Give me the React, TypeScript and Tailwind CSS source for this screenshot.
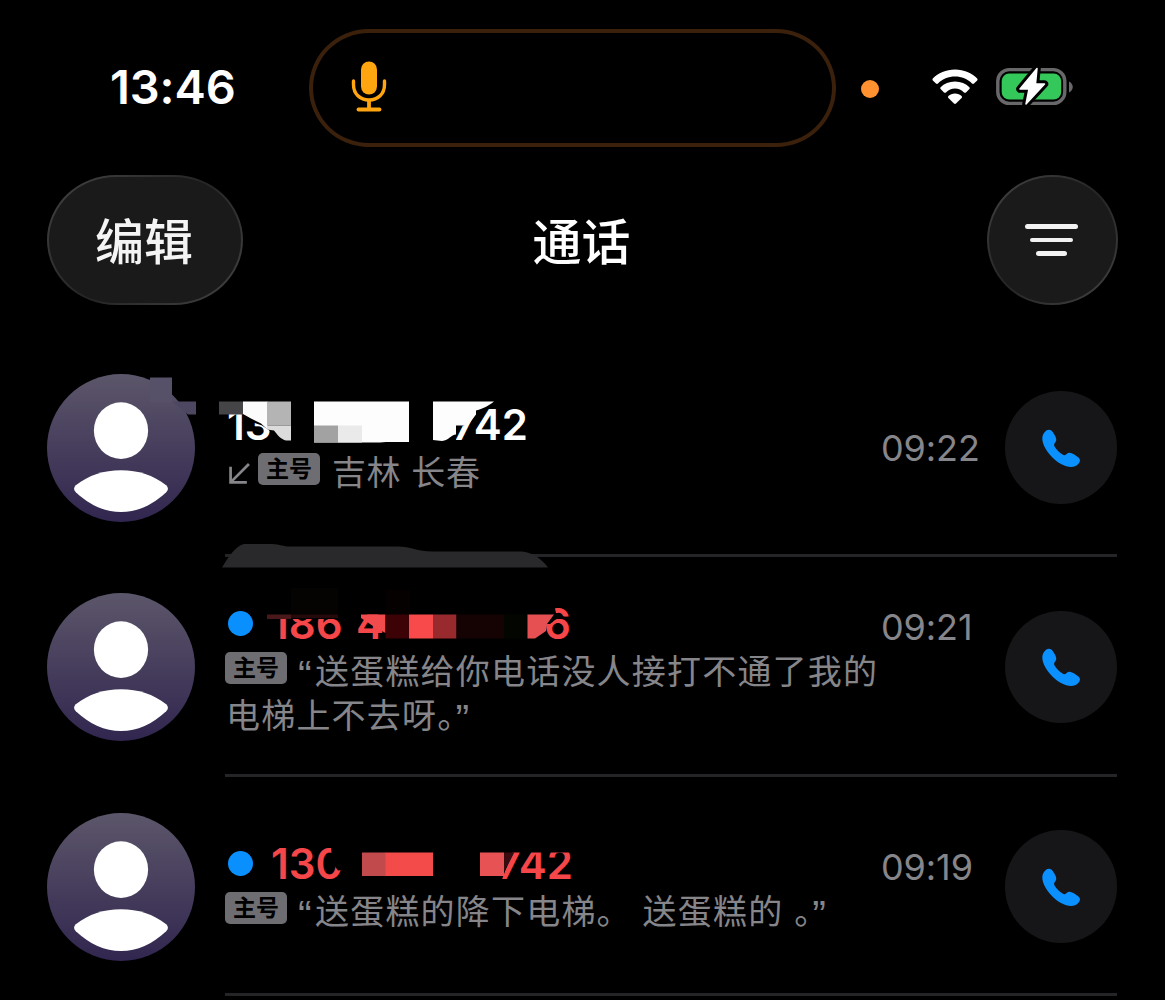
import type { ReactNode } from "react"

type Call = {
  id: number
  number: ReactNode
  missed: boolean
  place?: string
  voicemail?: string[]
  time: string
  numberClass: string
  timeClass: string
  top: number
  overlay: ReactNode
}

// rows are 219.5px high, overlays use the page's own y values
const ROW_H = 219.5

const calls: Call[] = [
  {
    id: 1,
    number: (
      <>
        <span className="w-[225px]">130</span>
        <span>742</span>
      </>
    ),
    missed: false,
    place: "吉林 长春",
    time: "09:22",
    numberClass: "mt-[62px]",
    timeClass: "mt-[87px]",
    top: 337.5,
    overlay: (
      <>
        <rect x="150" y="377" width="22" height="25" fill="#565069" />
        <path d="M172 401 H196 V414 H188 L172 401 Z" fill="#4e4762" />
        <path d="M243 405 H302 V443 H272 L271 431 L262 425 L250 421 L243 416 Z" fill="#000" />
        <rect x="219" y="401" width="24" height="13" fill="#454547" />
        <path d="M243 401 H267.500 V429 L261 423 L257 421 L251 418 L243 413.500 Z" fill="#fbfbfb" />
        <path d="M267 401 H291 V425 H267 Z" fill="#b4b4b4" />
        <path d="M267 425 H291 V440 H286 C281 439 277 434 274 430 L267 429 Z" fill="#dcdcdc" />
        <path d="M314 401 H409 V441.500 H386 L380 442 H314 Z" fill="#fdfdfd" />
        <rect x="314" y="425" width="24" height="17" fill="#a2a2a2" />
        <rect x="338" y="425" width="24" height="17" fill="#eaeaea" />
        <path d="M432 401 H476 V411 L464 425 H456 V441 H432 Z" fill="#000" />
        <path d="M433 401 H494 C489 405 484 408 476 410 V414 L467 426 V425 H456 V434 C451 434 449 440 442 440.500 L433 439.500 Z" fill="#fdfdfd" />
        <path
          d="M222 567 C228 557 236 545 244 543.500 H272 C280 544 284 546 290 546 H398 C410 546 418 551 432 551 H522 C534 552 543 560 548 567 Z"
          fill="#29292b"
        />
      </>
    ),
  },
  {
    id: 2,
    number: (
      <>
        <span className="w-[85px]">186</span>
        <span className="w-[188px]">4</span>
        <span>6</span>
      </>
    ),
    missed: true,
    voicemail: ["送蛋糕给你电话没人接打不通了我的", "电梯上不去呀"],
    time: "09:21",
    numberClass: "mt-[42px]",
    timeClass: "mt-[47px]",
    top: 557,
    overlay: (
      <>
        <rect x="266" y="600" width="120" height="14.5" fill="#000" />
        <rect x="266" y="614" width="78" height="5" fill="#000" />
        <rect x="267" y="614.5" width="24" height="4.5" fill="#4a181a" />
        <rect x="291" y="614.5" width="47" height="3.5" fill="#260a0b" />
        <rect x="291" y="588" width="47" height="26" fill="#050202" />
        <rect x="386" y="590" width="24" height="24" fill="#050101" />
        <path d="M361 614.500 H385.500 V633 L376 628 L361 618 Z" fill="#f14b4d" />
        <rect x="385.500" y="614.500" width="23.500" height="24" fill="#3c0205" />
        <rect x="409" y="614.500" width="24" height="24" fill="#f84a4a" />
        <rect x="433" y="614.500" width="23.500" height="24" fill="#982a2d" />
        <rect x="456.500" y="614.500" width="47.500" height="24" fill="#150303" />
        <rect x="504" y="614.500" width="24" height="24" fill="#030600" />
        <path d="M544 604 H554 L556 613 L569 619 L556 619 L550 624 H544 Z" fill="#000" />
        <path d="M527.500 614.500 H554 L547 624 L546 631 L535 638.500 H527.500 Z" fill="#e65053" />
      </>
    ),
  },
  {
    id: 3,
    number: (
      <>
        <span className="w-[226px]">130</span>
        <span>742</span>
      </>
    ),
    missed: true,
    voicemail: ["送蛋糕的降下电梯。 送蛋糕的 "],
    time: "09:19",
    numberClass: "mt-[62.5px]",
    timeClass: "mt-[67px]",
    top: 776.5,
    overlay: (
      <>
        <path d="M331 846 H346 V869 L338 870 L332 862 Z" fill="#000" />
        <rect x="362" y="852" width="24" height="23.5" fill="#c14a4d" />
        <rect x="385.5" y="852" width="47.5" height="23.5" fill="#f34b49" />
        <rect x="480" y="846" width="96" height="6" fill="#000" />
        <path d="M490 846 H514 L502 879 H490 Z" fill="#000" />
        <rect x="480" y="852" width="24" height="23.5" fill="#e75254" />
        <path d="M504 852 H514 L504 871 Z" fill="#3a0a0e" />
      </>
    ),
  },
]

const Avatar = () => (
  <svg className="mt-9 size-[148px] shrink-0" viewBox="0 0 149 149">
    <defs>
      <linearGradient id="avatar" x1="0" y1="0" x2="0" y2="1">
        <stop offset="0" stopColor="#5c566a" />
        <stop offset="1" stopColor="#31264f" />
      </linearGradient>
    </defs>
    <circle cx="74.500" cy="74.500" r="74.500" fill="url(#avatar)" />
    <ellipse cx="74.500" cy="57" rx="27.300" ry="28.500" fill="#fff" />
    <path
      d="M29 112 C42 102 57 97 74.500 97 C92 97 107 102 120 112 Q123.500 115.500 120 119 C106 132 91 139 74.500 139 C58 139 43 132 29 119 Q25.500 115.500 29 112 Z"
      fill="#fff"
    />
  </svg>
)

const SimBadge = () => (
  <span className="flex h-8 w-[62px] shrink-0 items-center justify-center rounded-[5px] bg-[#6e6d72] pt-px text-[23px] leading-none font-bold tracking-normal text-black">
    主号
  </span>
)

const Quote = ({ children }: { children: ReactNode }) => (
  <span className="inline-block h-[44px] w-[17px] align-top font-['Liberation_Sans',sans-serif] text-[41px] leading-[50px] tracking-normal">
    {children}
  </span>
)

const PhoneIcon = () => (
  <svg className="mt-px size-10" viewBox="0 0 40 40">
    <path
      d="M3 5 C5 2 8 0.800 10.300 2.500 C12 4 13.500 6.500 14.800 9.500 C15.600 11.500 15.400 13 14.200 14.500 C12.800 16 12.800 17.200 13.800 19 C16 22.200 18.500 24.500 21.500 26.500 C23 27.500 24.200 27.400 25.600 26 C27.300 24.500 29 24.400 31 25.400 C33.500 26.500 35.500 27.800 37.500 29.500 C39.600 31.300 39.400 33.500 37.500 35.800 C33.500 40 27.500 40 20 36 C12 31.500 4.500 23 2 15 C0.800 10.500 1.200 7.500 3 5 Z"
      fill="#0a91ff"
    />
  </svg>
)

const MicIcon = () => (
  <svg className="mb-[3px] h-[51px] w-9" viewBox="0 0 36 51" fill="none" stroke="#ffa50f" strokeLinecap="round">
    <rect x="10" y="0.500" width="16" height="33" rx="8" fill="#ffa50f" stroke="none" />
    <path d="M2.500 20 V23.500 C2.500 33 9 39 18 39 S33.500 33 33.500 23.500 V20" strokeWidth="3.400" />
    <path d="M18 40 V48" strokeWidth="3.800" />
    <path d="M7.500 48.500 H28.500" strokeWidth="3.800" />
  </svg>
)

const WifiIcon = () => (
  <svg className="h-9 w-[46px]" viewBox="0 0 46 36" fill="#fff">
    <path d="M23 0.500 C32 0.500 39.800 4 45.200 9.600 Q46 10.500 45.200 11.400 L42 14.500 Q41 15.300 40 14.400 C35.500 10 29.600 7.500 23 7.500 S10.500 10 6 14.400 Q5 15.300 4 14.500 L0.800 11.400 Q0 10.500 0.800 9.600 C6.200 4 14 0.500 23 0.500 Z" />
    <path d="M23 12.500 C28.800 12.500 33.800 14.700 37.400 18.200 Q38.200 19.200 37.400 20.100 L34 23.400 Q33 24.200 32 23.400 C29.500 21 26.500 19.600 23 19.600 S16.500 21 14 23.400 Q13 24.200 12 23.400 L8.600 20.100 Q7.800 19.200 8.600 18.200 C12.200 14.700 17.200 12.500 23 12.500 Z" />
    <path d="M23 24.500 C25.600 24.500 28 25.500 29.600 27 Q30.500 28 29.600 28.900 L24 34.500 Q23 35.300 22 34.500 L16.400 28.900 Q15.500 28 16.400 27 C18 25.500 20.400 24.500 23 24.500 Z" />
  </svg>
)

const BatteryIcon = () => (
  <svg className="h-10 w-[78px]" viewBox="0 0 78 40">
    <rect x="1.800" y="3.600" width="67" height="33.800" rx="11.500" fill="none" stroke="#68686b" strokeWidth="3.400" />
    <rect x="5.700" y="7.500" width="59.500" height="26" rx="7.500" fill="#34c759" />
    <path d="M73 15.500 C78 18 78 24 73 26.500 Z" fill="#68686b" />
    <path
      d="M41 2.500 L24 23 H33 L30 38 L48.500 18 H39.500 Z"
      fill="#fff"
      stroke="#000"
      strokeWidth="7.500"
      strokeLinejoin="round"
    />
    <path
      d="M41 2.500 L24 23 H33 L30 38 L48.500 18 H39.500 Z"
      fill="#fff"
      stroke="#fff"
      strokeWidth="1.500"
      strokeLinejoin="round"
    />
  </svg>
)

const StatusBar = () => (
  <div className="flex h-[175px] items-start">
    <div className="mt-[58px] ml-[110px] w-[199px] text-[47px] leading-[58px] font-semibold tracking-[-0.1px]">13:46</div>
    <div className="mt-[29px] flex h-[118px] w-[527px] items-center rounded-[60px_/_59px] border-4 border-[#3b210c] pl-[38px]">
      <MicIcon />
    </div>
    <div className="mt-[79.5px] ml-[25px] size-[18px] rounded-full bg-[#ff9130]" />
    <div className="mt-[68.5px] ml-[53px]">
      <WifiIcon />
    </div>
    <div className="mt-[66px] ml-[18px]">
      <BatteryIcon />
    </div>
  </div>
)

const NavBar = () => (
  <div className="flex h-[130px] items-center justify-between px-[47px]">
    <button className="h-[130px] w-[196px] rounded-[69px_/_65px] bg-linear-135 from-[#444444] via-[#252525] to-[#444444] p-0.5">
      <span className="flex h-full w-full items-center justify-center rounded-[67px_/_63px] bg-[#1a1a1a] pt-1 pr-0.5 text-[49px] leading-none font-medium text-[#f4f4f4]">
        编辑
      </span>
    </button>
    <h1 className="mr-[67px] flex-1 pt-1 text-center text-[49px] leading-none font-medium">通话</h1>
    <button className="h-[130px] w-[131px] rounded-full bg-linear-135 from-[#444444] via-[#252525] to-[#444444] p-0.5">
      <span className="flex h-full w-full flex-col items-center justify-center gap-[9px] rounded-full bg-[#1a1a1a] pr-0.5">
        <i className="h-[4.5px] w-[53px] rounded-full bg-[#f2f2f2]" />
        <i className="h-[4.5px] w-[43px] rounded-full bg-[#f2f2f2]" />
        <i className="h-[4.5px] w-[31px] rounded-full bg-[#f2f2f2]" />
      </span>
    </button>
  </div>
)

const CallRow = ({ call }: { call: Call }) => (
  <li className="relative flex h-[219.5px] pr-12 pl-[47px]">
    <Avatar />
    <div className="ml-[30px] flex flex-1 flex-col border-b-3 border-[#252527]">
      <div className="flex flex-1">
        <div className="w-[656px]">
          <div className={`mb-px flex h-[50px] items-center ${call.numberClass}`}>
            {call.missed && <span className="mr-[18px] mb-0.5 ml-[3px] size-[25px] rounded-full bg-[#0a8fff]" />}
            <div
              className={`flex text-[42px] leading-[50px] font-semibold ${call.missed ? "text-[#f5464a]" : "pl-0.5 text-white"}`}
            >
              {call.number}
            </div>
          </div>
          {call.place && (
            <div className="flex items-start text-[34px] leading-[44px] text-[#85858a]">
              <svg className="mt-[12.5px] mr-2 ml-1 size-[21px]" viewBox="0 0 20 20" fill="none" stroke="#85858a" strokeWidth="2.600">
                <path d="M19 1 L2 18 M1.500 3.500 V18.500 H17" />
              </svg>
              <span className="mt-0.5">
                <SimBadge />
              </span>
              <span className="ml-3 tracking-[0.6px]">{call.place}</span>
            </div>
          )}
          {call.voicemail?.map((line, i, lines) => (
            <div key={i} className="flex items-start text-[34px] leading-[44px] text-[#85858a]">
              {i === 0 && (
                <span className="mt-0.5 mr-[11px]">
                  <SimBadge />
                </span>
              )}
              <p className={`whitespace-pre tracking-[1.2px] ${i > 0 ? "pl-px" : ""}`}>
                {i === 0 && <Quote>“</Quote>}
                {line}
                {i === lines.length - 1 && (
                  <>
                    {/* half-width stop, the closing quote sits right behind it */}
                    <span className="[font-feature-settings:'halt']">。</span>
                    <Quote>”</Quote>
                  </>
                )}
              </p>
            </div>
          ))}
        </div>
        <time className={`text-[36px] leading-[46px] tracking-[-0.1px] text-[#85858a] ${call.timeClass}`}>{call.time}</time>
        <button className="mt-[53.5px] ml-auto flex size-[112.5px] shrink-0 items-center justify-center rounded-full bg-[#161618]">
          <PhoneIcon />
        </button>
      </div>
    </div>
    <svg
      className="pointer-events-none absolute inset-0 z-10 h-full w-full overflow-visible"
      viewBox={`0 ${call.top} 1165 ${ROW_H}`}
    >
      {call.overlay}
    </svg>
  </li>
)

export default function App() {
  return (
    <div className="h-[1000px] w-[1165px] overflow-hidden bg-black font-['Inter','Noto_Sans_CJK_SC',sans-serif] text-white" lang="zh-CN">
      <StatusBar />
      <NavBar />
      <ul className="pt-[32.5px]">
        {calls.map((call) => (
          <CallRow key={call.id} call={call} />
        ))}
      </ul>
    </div>
  )
}
